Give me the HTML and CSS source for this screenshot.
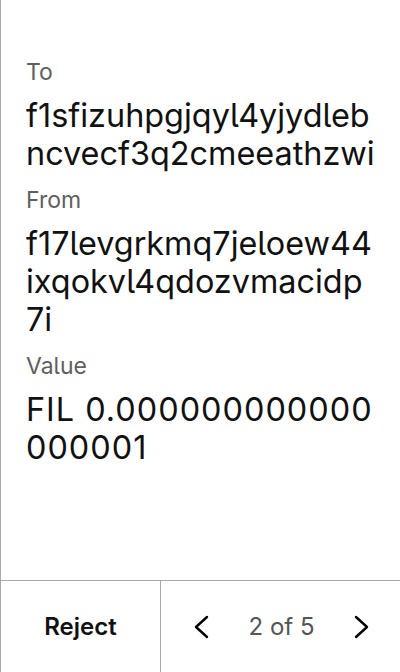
FILE: index.html
```html
<!DOCTYPE html>
<html>
<head>
<meta charset="utf-8">
<link rel="stylesheet" href="styles.css">
</head>
<body>
<div class="screen">
  <div class="content">
    <div class="label">To</div>
    <div class="value">f1sfizuhpgjqyl4yjydlebncvecf3q2cmeeathzwi</div>
    <div class="label">From</div>
    <div class="value">f17levgrkmq7jeloew44ixqokvl4qdozvmacidp7i</div>
    <div class="label">Value</div>
    <div class="value amount">FIL 0.000000000000000001</div>
  </div>
  <div class="footer">
    <div class="reject">Reject</div>
    <div class="pager">
      <svg class="chev" width="16" height="24" viewBox="0 0 16 24"><path d="M14 2 L3 12 L14 22" fill="none" stroke="#000" stroke-width="2.4" stroke-linecap="round" stroke-linejoin="round"/></svg>
      <span class="count">2 of 5</span>
      <svg class="chev" width="16" height="24" viewBox="0 0 16 24"><path d="M2 2 L13 12 L2 22" fill="none" stroke="#000" stroke-width="2.4" stroke-linecap="round" stroke-linejoin="round"/></svg>
    </div>
  </div>
</div>
</body>
</html>
```

FILE: styles.css
```css
html, body {
  margin: 0;
  padding: 0;
  background: #fff;
}
body {
  font-family: Inter, "Noto Sans", sans-serif;
  font-feature-settings: "cv05" 1;
  color: #111;
}
.screen {
  width: 399px;
  height: 672px;
  border-left: 1px solid #a8a8a8;
  display: flex;
  flex-direction: column;
}
.content {
  flex: 1;
  padding: 58px 25px 0 25px;
}
.label {
  font-size: 23px;
  line-height: 28px;
  color: #5f5f5f;
  margin-bottom: 11px;
}
.value {
  font-size: 32.4px;
  line-height: 38px;
  color: #111;
  word-break: break-all;
  margin-bottom: 13px;
}
.amount {
  letter-spacing: 1px;
}
.footer {
  height: 91px;
  border-top: 1px solid #a8a8a8;
  display: flex;
}
.reject {
  width: 159px;
  border-right: 1px solid #a8a8a8;
  display: flex;
  align-items: center;
  justify-content: center;
  font-size: 24px;
  font-weight: 600;
  color: #111;
}
.pager {
  flex: 1;
  display: flex;
  align-items: center;
  justify-content: space-between;
  padding: 0 30px 0 32px;
}
.count {
  font-size: 24px;
  color: #555;
}
.chev {
  display: block;
}
```
